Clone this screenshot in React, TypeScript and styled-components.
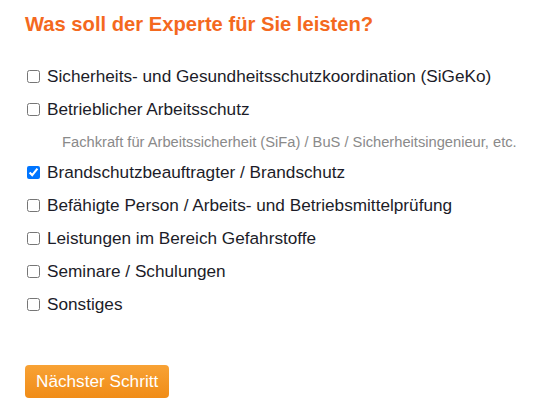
import React, { useState } from "react";
import styled, { createGlobalStyle } from "styled-components";

const Global = createGlobalStyle`
  html, body { margin: 0; padding: 0; background: #fff; }
  body { font-family: "Liberation Sans", Arial, sans-serif; }
`;

const Wrap = styled.div`
  padding: 12px 0 0 25px;
  display: flex;
  flex-direction: column;
  align-items: flex-start;
`;

const Title = styled.h2`
  margin: 0;
  font-size: 20.2px;
  font-weight: 700;
  color: #f4691e;
  line-height: 24px;
`;

const List = styled.div`
  margin-top: 24px;
  display: flex;
  flex-direction: column;
`;

const Option = styled.label`
  display: flex;
  align-items: center;
  height: 33px;
  font-size: 17.2px;
  color: #1c1c28;
  white-space: nowrap;
  cursor: pointer;
`;

const Box = styled.input`
  width: 13px;
  height: 13px;
  margin: 0 7px 0 2px;
`;

const Hint = styled.div`
  height: 30px;
  box-sizing: border-box;
  padding: 2px 0 0 37px;
  font-size: 14.7px;
  line-height: 28px;
  color: #8a8a8a;
  white-space: nowrap;
`;

const Button = styled.button`
  margin-top: 44px;
  height: 33px;
  padding: 0 11px;
  border: none;
  border-radius: 4px;
  background: linear-gradient(180deg, #f8a235 0%, #f08c17 100%);
  color: #fff;
  font-family: "Liberation Sans", Arial, sans-serif;
  font-size: 17.2px;
  cursor: pointer;
`;

const options = [
  { label: "Sicherheits- und Gesundheitsschutzkoordination (SiGeKo)" },
  {
    label: "Betrieblicher Arbeitsschutz",
    hint: "Fachkraft für Arbeitssicherheit (SiFa) / BuS / Sicherheitsingenieur, etc.",
  },
  { label: "Brandschutzbeauftragter / Brandschutz", checked: true },
  { label: "Befähigte Person / Arbeits- und Betriebsmittelprüfung" },
  { label: "Leistungen im Bereich Gefahrstoffe" },
  { label: "Seminare / Schulungen" },
  { label: "Sonstiges" },
];

export default function App() {
  const [sel, setSel] = useState<boolean[]>(options.map((o) => !!o.checked));
  return (
    <>
      <Global />
      <Wrap>
        <Title>Was soll der Experte für Sie leisten?</Title>
        <List>
          {options.map((o, i) => (
            <React.Fragment key={o.label}>
              <Option>
                <Box
                  type="checkbox"
                  checked={sel[i]}
                  onChange={() => setSel((s) => s.map((v, j) => (j === i ? !v : v)))}
                />
                {o.label}
              </Option>
              {o.hint && <Hint>{o.hint}</Hint>}
            </React.Fragment>
          ))}
        </List>
        <Button type="button">Nächster Schritt</Button>
      </Wrap>
    </>
  );
}
